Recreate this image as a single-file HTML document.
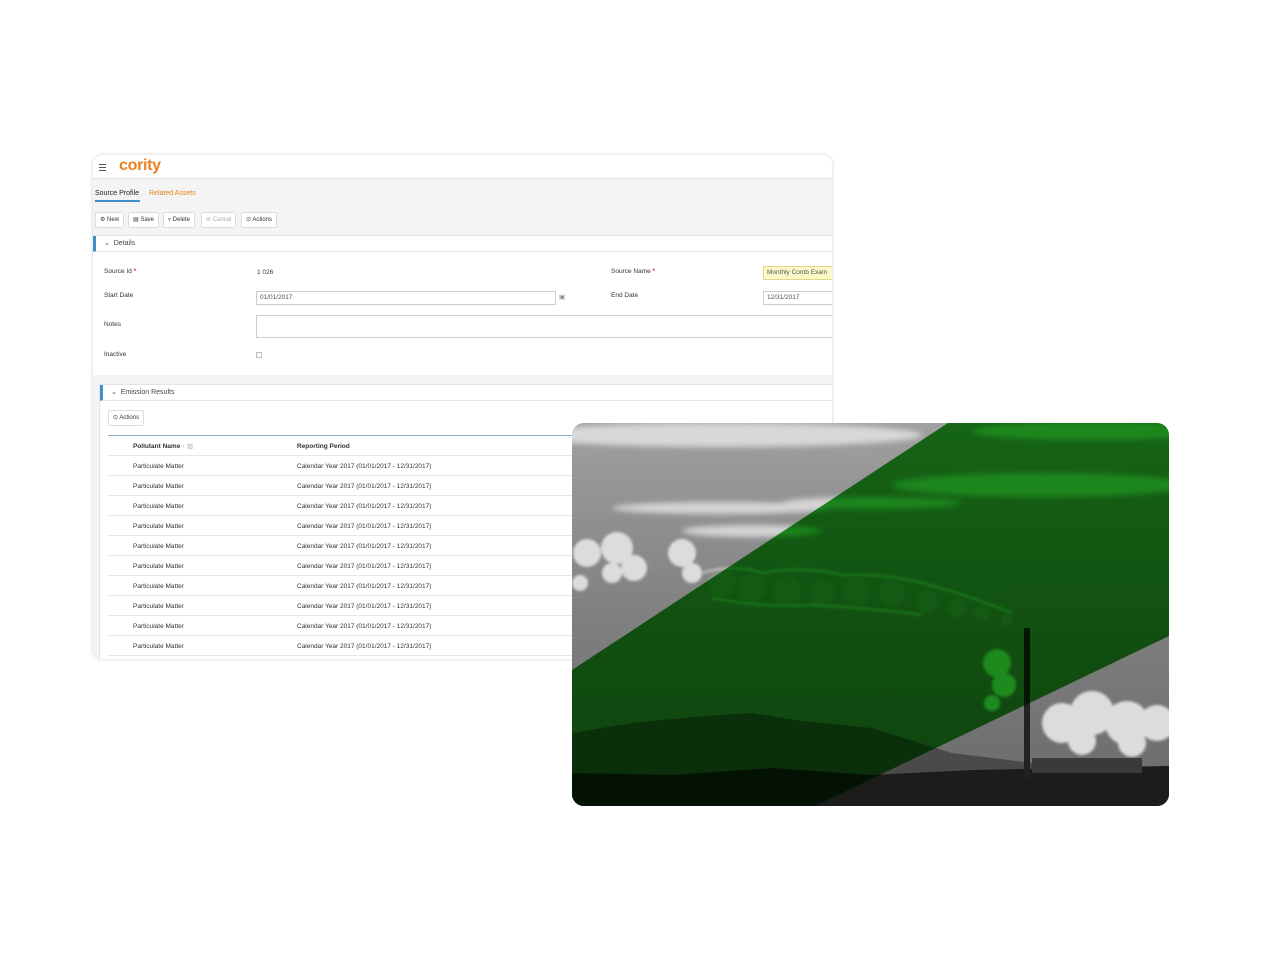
<!DOCTYPE html>
<html><head><meta charset="utf-8"><style>
*{box-sizing:border-box;margin:0;padding:0}
body{width:1264px;height:960px;background:#fff;position:relative;overflow:hidden;font-family:"Liberation Sans",sans-serif;color:#333}
.card{position:absolute;left:93px;top:155px;width:739px;height:504px;border-radius:10px;background:#f4f4f4;box-shadow:0 0 4px rgba(0,0,0,.18);overflow:hidden}
.hdr{height:24px;background:#fff;border-bottom:1px solid #e6e6e6;position:relative}
.logo{position:absolute;left:26px;top:2px;font-size:16px;font-weight:bold;color:#e8821e;letter-spacing:-.3px}
.burger{position:absolute;left:6px;top:9px;width:7px}
.burger i{display:block;height:1px;background:#555;margin-bottom:2px}
.tab{position:absolute;top:35px;font-size:7px}
.btn{position:absolute;top:57px;height:16px;border:1px solid #ddd;background:#fff;border-radius:2px;font-size:6px;line-height:14px;padding:0 4px;color:#333}
.panel{position:absolute;background:#fff;border-top:1px solid #e3e3e3}
.ph{height:16px;border-bottom:1px solid #e8e8e8;border-left:3px solid #3d8fc6;font-size:7px;line-height:16px;padding-left:8px;color:#444}
.lbl{position:absolute;font-size:6.5px;color:#333}
.inp{position:absolute;height:14px;border:1px solid #ccc;background:#fff;font-size:6.5px;line-height:12px;padding-left:3px;color:#555}
.row{position:absolute;left:14px;width:700px;height:20px;border-bottom:1px solid #e8e8e8;font-size:6.5px;line-height:21px}
.row span{position:absolute}
.photo{position:absolute;left:572px;top:423px;width:597px;height:383px;border-radius:12px;overflow:hidden}
</style></head><body>
<div class="card">
 <div class="hdr"><div class="burger"><i></i><i></i><i></i></div><div class="logo">cority</div></div>
 <div class="tab" style="left:2px;color:#222">Source Profile</div>
 <div style="position:absolute;left:2px;top:45px;width:45px;height:2px;background:#3d8fc6"></div>
 <div class="tab" style="left:56px;color:#e8821e">Related Assets</div>
 <div class="btn" style="left:2px">⚙ New</div>
 <div class="btn" style="left:35px">▤ Save</div>
 <div class="btn" style="left:70px">▿ Delete</div>
 <div class="btn" style="left:108px;color:#aaa">⊘ Cancel</div>
 <div class="btn" style="left:148px">⊙ Actions</div>
 <div class="panel" style="left:0;top:80px;width:739px;height:140px">
  <div class="ph">⌄&nbsp; Details</div>
  <div class="lbl" style="left:11px;top:32px">Source Id <b style="color:#d33">*</b></div>
  <div class="lbl" style="left:164px;top:33px">1 026</div>
  <div class="lbl" style="left:518px;top:32px">Source Name <b style="color:#d33">*</b></div>
  <div class="inp" style="left:670px;top:30px;width:80px;background:#fdf8c8;border-color:#e2d98a">Monthly Comb Exam</div>
  <div class="lbl" style="left:11px;top:56px">Start Date</div>
  <div class="inp" style="left:163px;top:55px;width:300px">01/01/2017</div>
  <div class="lbl" style="left:466px;top:57px;color:#888">▣</div>
  <div class="lbl" style="left:518px;top:56px">End Date</div>
  <div class="inp" style="left:670px;top:55px;width:80px">12/31/2017</div>
  <div class="lbl" style="left:11px;top:85px">Notes</div>
  <div class="inp" style="left:163px;top:79px;width:590px;height:23px"></div>
  <div class="lbl" style="left:11px;top:115px">Inactive</div>
  <div style="position:absolute;left:163px;top:116px;width:6px;height:6px;border:1px solid #bbb"></div>
 </div>
 <div class="panel" style="left:6px;top:229px;width:739px;height:280px;border-left:1px solid #e3e3e3">
  <div class="ph">⌄&nbsp; Emission Results</div>
  <div class="btn" style="left:8px;top:25px">⊙ Actions</div>
  <div style="position:absolute;left:8px;top:50px;width:730px;height:1px;background:#7ab3d6"></div>
  <div class="row" style="top:51px;left:8px;font-weight:bold"><span style="left:25px">Pollutant Name <b style="color:#aaa;font-weight:normal">↑ ▥</b></span><span style="left:189px">Reporting Period</span></div>
  <div class="row" style="top:71px;left:8px"><span style="left:25px">Particulate Matter</span><span style="left:189px">Calendar Year 2017 (01/01/2017 - 12/31/2017)</span></div>
  <div class="row" style="top:91px;left:8px"><span style="left:25px">Particulate Matter</span><span style="left:189px">Calendar Year 2017 (01/01/2017 - 12/31/2017)</span></div>
  <div class="row" style="top:111px;left:8px"><span style="left:25px">Particulate Matter</span><span style="left:189px">Calendar Year 2017 (01/01/2017 - 12/31/2017)</span></div>
  <div class="row" style="top:131px;left:8px"><span style="left:25px">Particulate Matter</span><span style="left:189px">Calendar Year 2017 (01/01/2017 - 12/31/2017)</span></div>
  <div class="row" style="top:151px;left:8px"><span style="left:25px">Particulate Matter</span><span style="left:189px">Calendar Year 2017 (01/01/2017 - 12/31/2017)</span></div>
  <div class="row" style="top:171px;left:8px"><span style="left:25px">Particulate Matter</span><span style="left:189px">Calendar Year 2017 (01/01/2017 - 12/31/2017)</span></div>
  <div class="row" style="top:191px;left:8px"><span style="left:25px">Particulate Matter</span><span style="left:189px">Calendar Year 2017 (01/01/2017 - 12/31/2017)</span></div>
  <div class="row" style="top:211px;left:8px"><span style="left:25px">Particulate Matter</span><span style="left:189px">Calendar Year 2017 (01/01/2017 - 12/31/2017)</span></div>
  <div class="row" style="top:231px;left:8px"><span style="left:25px">Particulate Matter</span><span style="left:189px">Calendar Year 2017 (01/01/2017 - 12/31/2017)</span></div>
  <div class="row" style="top:251px;left:8px"><span style="left:25px">Particulate Matter</span><span style="left:189px">Calendar Year 2017 (01/01/2017 - 12/31/2017)</span></div>
 </div>
</div>
<div class="photo">
<svg width="597" height="383" viewBox="0 0 597 383">
 <defs>
  <linearGradient id="sky" x1="0" y1="0" x2="0" y2="1">
   <stop offset="0" stop-color="#a0a0a0"/><stop offset=".5" stop-color="#808080"/><stop offset="1" stop-color="#6a6a6a"/>
  </linearGradient>
  <filter id="b"><feGaussianBlur stdDeviation="3"/></filter>
  <filter id="b2"><feGaussianBlur stdDeviation="1.2"/></filter>
 </defs>
 <rect width="597" height="383" fill="url(#sky)"/>
 <g filter="url(#b)" fill="#e6e6e6" opacity=".8">
  <ellipse cx="150" cy="12" rx="200" ry="12"/>
  <ellipse cx="520" cy="8" rx="120" ry="9"/>
  <ellipse cx="150" cy="85" rx="110" ry="6"/>
  <ellipse cx="470" cy="62" rx="150" ry="12"/>
  <ellipse cx="300" cy="80" rx="90" ry="6"/>
  <ellipse cx="180" cy="108" rx="70" ry="6"/>
 </g>
 <g filter="url(#b2)" fill="#dcdcdc">
  <circle cx="15" cy="130" r="14"/><circle cx="45" cy="125" r="16"/><circle cx="62" cy="145" r="13"/>
  <circle cx="40" cy="150" r="10"/><circle cx="110" cy="130" r="14"/><circle cx="120" cy="150" r="10"/>
  <circle cx="8" cy="160" r="8"/>
  <circle cx="425" cy="240" r="14"/><circle cx="432" cy="262" r="12"/><circle cx="420" cy="280" r="8"/>
  <circle cx="490" cy="300" r="20"/><circle cx="520" cy="290" r="22"/><circle cx="555" cy="300" r="22"/><circle cx="585" cy="300" r="18"/><circle cx="510" cy="318" r="14"/><circle cx="560" cy="320" r="14"/>
 </g>
 <g filter="url(#b2)" fill="#909090">
  <circle cx="150" cy="160" r="14"/><circle cx="180" cy="165" r="14"/><circle cx="215" cy="168" r="14"/>
  <circle cx="250" cy="170" r="13"/><circle cx="285" cy="168" r="14"/><circle cx="320" cy="170" r="13"/>
  <circle cx="355" cy="178" r="11"/><circle cx="385" cy="185" r="9"/><circle cx="410" cy="190" r="8"/><circle cx="435" cy="196" r="6"/>
 </g>
 <g filter="url(#b2)" fill="none" stroke="#d6d6d6" stroke-width="2" opacity=".8">
  <path d="M130 150 Q160 140 190 150 Q230 142 270 152 Q310 150 350 160 Q390 170 440 190"/>
  <path d="M140 175 Q190 185 240 182 Q300 185 350 192"/>
 </g>
 <path d="M0 310 L60 300 L120 294 L180 290 L230 298 L300 305 L380 330 L460 340 L597 345 L597 383 L0 383Z" fill="#4a4a4a"/>
 <path d="M0 350 L100 352 L200 345 L300 352 L400 347 L500 345 L597 343 L597 383 L0 383Z" fill="#1c1c1c"/>
 <rect x="452" y="205" width="6" height="150" fill="#222"/>
 <rect x="460" y="335" width="110" height="15" fill="#3a3a3a"/>
 <polygon points="376,0 597,0 597,213 243,383 0,383 0,247" fill="#22a022" style="mix-blend-mode:multiply"/>
</svg>
</div>
</body></html>
